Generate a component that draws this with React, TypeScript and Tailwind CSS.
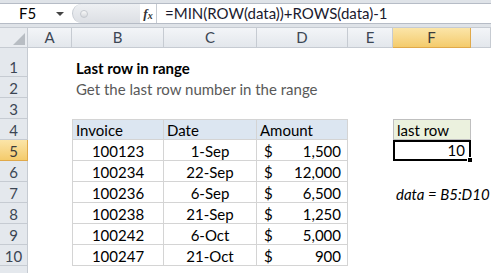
import React from "react";

const cols = ["A", "B", "C", "D", "E", "F", ""];

const data = [
  ["100123", "1-Sep", "1,500"],
  ["100234", "22-Sep", "12,000"],
  ["100236", "6-Sep", "6,500"],
  ["100238", "21-Sep", "1,250"],
  ["100242", "6-Oct", "5,000"],
  ["100247", "21-Oct", "900"],
];

function tableCell(col: number, extra = "") {
  // B4:D10 box borders
  return `border-r border-b border-[#d4d4d4] ${col === 1 ? "border-l" : ""} ${extra}`;
}

export default function App() {
  const cells: React.ReactNode[] = [];

  // column headers
  cells.push(
    <div key="corner" className="relative bg-[#e9ecf0] border-r border-b border-[#c6cbd2]">
      <div className="absolute right-[2px] bottom-[2px] w-0 h-0 border-l-[12px] border-l-transparent border-b-[12px] border-b-[#b8bdc3]" />
    </div>
  );
  cols.forEach((c, i) => {
    const sel = c === "F";
    cells.push(
      <div
        key={"h" + i}
        className={`flex items-center justify-center text-[15px] border-r border-b ${
          sel
            ? "bg-gradient-to-b from-[#fbe5a8] to-[#f4cb6b] border-[#e0a94a] text-[#3b3b3b]"
            : "bg-gradient-to-b from-[#f3f5f8] to-[#e3e7ec] border-[#c6cbd2] text-[#3c4654]"
        }`}
      >
        {c}
      </div>
    );
  });

  for (let r = 1; r <= 11; r++) {
    const sel = r === 5;
    cells.push(
      <div
        key={"r" + r}
        className={`flex items-end justify-center pb-[1px] text-[15px] border-r border-b ${
          sel
            ? "bg-gradient-to-b from-[#fbe5a8] to-[#f4cb6b] border-[#e0a94a] text-[#3b3b3b]"
            : "bg-[#e4e8ed] border-[#c6cbd2] text-[#3c4654]"
        }`}
      >
        {r <= 10 ? r : ""}
      </div>
    );
    for (let c = 0; c < 7; c++) {
      const key = `c${r}-${c}`;
      let node: React.ReactNode = <div key={key} />;
      if (r === 1 && c === 1) {
        node = (
          <div key={key} className="flex items-end pl-[4px] pb-[1px] whitespace-nowrap font-bold text-[15px] text-black overflow-visible">
            Last row in range
          </div>
        );
      } else if (r === 2 && c === 1) {
        node = (
          <div key={key} className="flex items-end pl-[4px] pb-[1px] whitespace-nowrap text-[15px] text-[#595959] overflow-visible">
            Get the last row number in the range
          </div>
        );
      } else if (r === 4 && c >= 1 && c <= 3) {
        node = (
          <div key={key} className={`flex items-end pl-[3px] pb-[1px] bg-[#dce6f1] text-[15px] text-black border-t ${tableCell(c)}`}>
            {["Invoice", "Date", "Amount"][c - 1]}
          </div>
        );
      } else if (r >= 5 && r <= 10 && c >= 1 && c <= 3) {
        const row = data[r - 5];
        if (c === 3) {
          node = (
            <div key={key} className={`flex items-end justify-between pl-[7px] pr-[6px] pb-[1px] text-[15px] text-black ${tableCell(c)}`}>
              <span>$</span>
              <span>{row[2]}</span>
            </div>
          );
        } else {
          node = (
            <div key={key} className={`flex items-end justify-center pb-[1px] text-[15px] text-black ${tableCell(c)}`}>
              {row[c - 1]}
            </div>
          );
        }
      } else if (r === 4 && c === 5) {
        node = (
          <div key={key} className="flex items-end pl-[3px] pb-[1px] bg-[#ebf1de] border border-[#bfbfbf] text-[15px] text-black">
            last row
          </div>
        );
      } else if (r === 5 && c === 5) {
        node = (
          <div key={key} className="relative flex items-end justify-end pr-[4px] pb-[1px] border-2 border-black text-[15px] text-black">
            10
            <div className="absolute right-[-4px] bottom-[-4px] w-[6px] h-[6px] bg-black border border-white" />
          </div>
        );
      } else if (r === 7 && c === 5) {
        node = (
          <div key={key} className="flex items-end pl-[3px] pb-[1px] whitespace-nowrap italic text-[15px] text-black overflow-visible">
            data = B5:D10
          </div>
        );
      }
      cells.push(node);
    }
  }

  return (
    <div className="w-[491px] h-[273px] overflow-hidden bg-white font-['Lato',sans-serif]">
      {/* formula bar */}
      <div className="h-[28px] bg-[#dfe3e8] pt-[3px] pb-[4px] border-b border-[#c6cbd2]">
        <div className="h-[21px] flex items-stretch bg-white border-y border-[#b6bcc6]">
          <div className="w-[72px] flex items-center justify-between pl-[19px] pr-[8px] text-[15px] text-black">
            <span>F5</span>
            <span className="w-0 h-0 border-l-[4px] border-r-[4px] border-t-[4px] border-l-transparent border-r-transparent border-t-[#444]" />
          </div>
          <div className="w-[68px] flex items-center rounded-l-full bg-gradient-to-b from-[#eef0f3] to-[#dcdfe4] border-l border-[#c6cbd2]">
            <div className="ml-[7px] w-[8px] h-[8px] rounded-full bg-gradient-to-b from-[#fafafa] to-[#d5d8dc] border border-[#c4c8ce]" />
          </div>
          <div className="w-[17px] flex items-center justify-center font-['Liberation_Serif',serif] italic font-bold text-[13px] text-[#333] border-r border-[#c6cbd2]">
            f<span className="text-[10px] mt-[3px]">x</span>
          </div>
          <div className="flex-1 flex items-center pl-[8px] text-[15px] text-[#1a1a2e] whitespace-nowrap">
            =MIN(ROW(data))+ROWS(data)-1
          </div>
        </div>
      </div>
      <div className="grid grid-cols-[28px_44px_92px_93px_91px_45px_78px_20px] grid-rows-[20px_29px_repeat(10,21px)] leading-none">
        {cells}
      </div>
    </div>
  );
}
